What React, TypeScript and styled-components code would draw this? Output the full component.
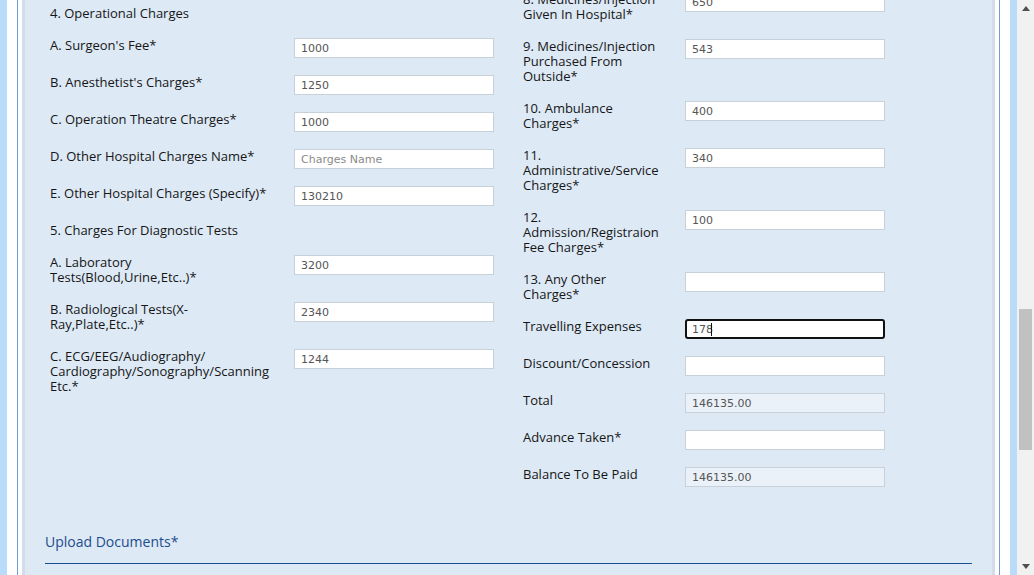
import React from "react"
import styled, { createGlobalStyle } from "styled-components"

const GlobalStyle = createGlobalStyle`
  html, body {
    margin: 0;
    padding: 0;
    overflow: hidden;
  }
  body {
    font-family: "Open Sans", "Liberation Sans", sans-serif;
  }
`

const Page = styled.div`
  display: flex;
  width: 1034px;
  height: 575px;
  overflow: hidden;
`

const Viewport = styled.div`
  flex: 1;
  display: flex;
  background: #b8dcfa;
  padding: 0 7px;
`

const Frame = styled.div`
  flex: 1;
  display: flex;
  background: #ffffff;
  padding: 0 10px;
`

const Bordered = styled.div`
  flex: 1;
  display: flex;
  background: #ffffff;
  border-left: 1px solid #6d9fd5;
  border-right: 1px solid #6d9fd5;
  padding: 0 4px;
  overflow: hidden;
`

const Panel = styled.div`
  flex: 1;
  background: #dde9f5;
  border-left: 3px solid #d4dce8;
  border-right: 3px solid #d4dce8;
  padding: 0 20px;
  /* page is scrolled: the form starts above the window */
  margin-top: -9px;
`

const FormGrid = styled.div`
  display: grid;
  grid-template-columns: 478px 1fr;
  align-items: start;
`

const Column = styled.div<{ $padTop: number; $padLeft: number }>`
  display: flex;
  flex-direction: column;
  padding-top: ${(p) => p.$padTop}px;
  padding-left: ${(p) => p.$padLeft}px;
`

const Row = styled.div`
  display: flex;
  align-items: flex-start;
  margin-bottom: 17px;
`

const Label = styled.div<{ $width: number; $text: number }>`
  width: ${(p) => p.$width}px;
  flex: none;
  box-sizing: border-box;
  padding-right: ${(p) => p.$width - p.$text}px;
  font-size: 13px;
  line-height: 15px;
  color: #161616;
`

const Heading = styled.div`
  font-size: 13px;
  line-height: 15px;
  color: #161616;
`

const Field = styled.div`
  position: relative;
  width: 200px;
  flex: none;
`

const Input = styled.input<{ $focused?: boolean }>`
  display: block;
  width: 200px;
  height: 20px;
  box-sizing: border-box;
  margin: 0;
  padding: 0 0 0 ${(p) => (p.$focused ? 5 : 6)}px;
  font-family: "DejaVu Sans", Verdana, sans-serif;
  font-size: 11px;
  color: #555555;
  background: ${(p) => (p.readOnly && !p.$focused ? "#eaf1f9" : "#ffffff")};
  border: ${(p) => (p.$focused ? "2px solid #111111" : "1px solid #c8d0da")};
  border-radius: ${(p) => (p.$focused ? 3 : 0)}px;
  outline: none;

  &::placeholder {
    color: #8a8a8a;
  }
`

const Caret = styled.span`
  position: absolute;
  left: 26px;
  top: 4px;
  width: 1px;
  height: 13px;
  background: #111111;
`

const SectionTitle = styled.div`
  margin-top: 28px;
  font-size: 14px;
  line-height: 20px;
  color: #1d4c8c;
`

const Divider = styled.div`
  margin-top: 11px;
  height: 1px;
  background: #1b4f93;
`

const Scrollbar = styled.div`
  width: 17px;
  flex: none;
  display: flex;
  flex-direction: column;
  background: #f1f1f1;
`

const ArrowButton = styled.div`
  height: 17px;
  flex: none;
  display: flex;
  align-items: center;
  justify-content: center;
`

const Track = styled.div`
  flex: 1;
`

const Thumb = styled.div<{ $top: number; $height: number }>`
  margin: ${(p) => p.$top}px 2px 0;
  height: ${(p) => p.$height}px;
  background: #c1c1c1;
`

type Item = {
  heading?: string
  label?: string
  value?: string
  placeholder?: string
  readOnly?: boolean
  focused?: boolean
}

const leftItems: Item[] = [
  { heading: "4. Operational Charges" },
  { label: "A. Surgeon's Fee*", value: "1000" },
  { label: "B. Anesthetist's Charges*", value: "1250" },
  { label: "C. Operation Theatre Charges*", value: "1000" },
  { label: "D. Other Hospital Charges Name*", placeholder: "Charges Name" },
  { label: "E. Other Hospital Charges (Specify)*", value: "130210" },
  { heading: "5. Charges For Diagnostic Tests" },
  { label: "A. Laboratory Tests(Blood,Urine,Etc..)*", value: "3200" },
  { label: "B. Radiological Tests(X-Ray,Plate,Etc..)*", value: "2340" },
  // zero-width spaces let the long slash-joined word break like the original
  {
    label: "C. ECG/EEG/Audiography/\u200BCardiography/Sonography/Scanning Etc.*",
    value: "1244",
  },
]

const rightItems: Item[] = [
  { label: "8. Medicines/Injection Given In Hospital*", value: "650" },
  { label: "9. Medicines/Injection Purchased From Outside*", value: "543" },
  { label: "10. Ambulance Charges*", value: "400" },
  { label: "11. Administrative/Service Charges*", value: "340" },
  { label: "12. Admission/Registraion Fee Charges*", value: "100" },
  { label: "13. Any Other Charges*", value: "" },
  { label: "Travelling Expenses", value: "178", focused: true },
  { label: "Discount/Concession", value: "" },
  { label: "Total", value: "146135.00", readOnly: true },
  { label: "Advance Taken*", value: "" },
  { label: "Balance To Be Paid", value: "146135.00", readOnly: true },
]

const UpArrow = () => (
  <svg width="8" height="5" viewBox="0 0 8 5">
    <path d="M0 5 L4 0 L8 5 Z" fill="#505050" />
  </svg>
)

const DownArrow = () => (
  <svg width="8" height="5" viewBox="0 0 8 5">
    <path d="M0 0 L8 0 L4 5 Z" fill="#505050" />
  </svg>
)

const FormColumn = ({
  items,
  labelWidth,
  textWidth,
  padTop,
  padLeft,
}: {
  items: Item[]
  labelWidth: number
  textWidth: number
  padTop: number
  padLeft: number
}) => (
  <Column $padTop={padTop} $padLeft={padLeft}>
    {items.map((item, i) =>
      item.heading ? (
        <Row key={i}>
          <Heading>{item.heading}</Heading>
        </Row>
      ) : (
        <Row key={i}>
          <Label $width={labelWidth} $text={textWidth}>
            {item.label}
          </Label>
          <Field>
            <Input
              type="text"
              defaultValue={item.value}
              placeholder={item.placeholder}
              readOnly={item.readOnly}
              $focused={item.focused}
            />
            {item.focused && <Caret />}
          </Field>
        </Row>
      )
    )}
  </Column>
)

const App = () => (
  <>
    <GlobalStyle />
    <Page>
      <Viewport>
        <Frame>
          <Bordered>
            <Panel>
              <FormGrid>
                <FormColumn items={leftItems} labelWidth={244} textWidth={224} padTop={15} padLeft={5} />
                <FormColumn items={rightItems} labelWidth={162} textWidth={137} padTop={1} padLeft={0} />
              </FormGrid>
              <SectionTitle>Upload Documents*</SectionTitle>
              <Divider />
            </Panel>
          </Bordered>
        </Frame>
      </Viewport>
      <Scrollbar>
        <ArrowButton>
          <UpArrow />
        </ArrowButton>
        <Track>
          <Thumb $top={292} $height={141} />
        </Track>
        <ArrowButton>
          <DownArrow />
        </ArrowButton>
      </Scrollbar>
    </Page>
  </>
)

export default App
